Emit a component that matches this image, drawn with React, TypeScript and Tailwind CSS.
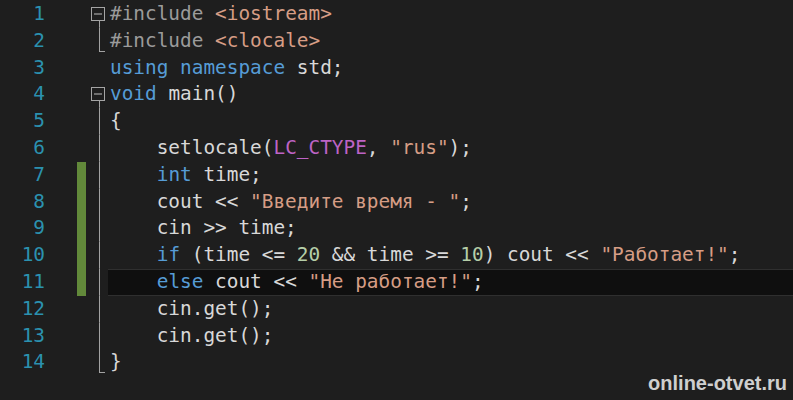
import React from "react";

type Tok = [string, string];

const C = {
  p: "text-[#d8d8d8]",
  pp: "text-[#9b9b9b]",
  s: "text-[#d69d85]",
  k: "text-[#569cd6]",
  m: "text-[#bd63c5]",
  n: "text-[#b5cea8]",
};

const lines: Tok[][] = [
  [["#include", "pp"], [" <iostream>", "s"]],
  [["#include", "pp"], [" <clocale>", "s"]],
  [["using", "k"], [" ", "p"], ["namespace", "k"], [" std;", "p"]],
  [["void", "k"], [" main()", "p"]],
  [["{", "p"]],
  [["    setlocale(", "p"], ["LC_CTYPE", "m"], [", ", "p"], ['"rus"', "s"], [");", "p"]],
  [["    ", "p"], ["int", "k"], [" time;", "p"]],
  [["    cout << ", "p"], ['"Введите время - "', "s"], [";", "p"]],
  [["    cin >> time;", "p"]],
  [
    ["    ", "p"],
    ["if", "k"],
    [" (time <= ", "p"],
    ["20", "n"],
    [" && time >= ", "p"],
    ["10", "n"],
    [") cout << ", "p"],
    ['"Работает!"', "s"],
    [";", "p"],
  ],
  [["    ", "p"], ["else", "k"], [" cout << ", "p"], ['"Не работает!"', "s"], [";", "p"]],
  [["    cin.get();", "p"]],
  [["    cin.get();", "p"]],
  [["}", "p"]],
];

// fold gutter shape per line
const fold = ["box", "end", "none", "box", "mid", "mid", "mid", "mid", "mid", "mid", "mid", "mid", "mid", "end"];

function Fold({ kind }: { kind: string }) {
  const stroke = "#a5a5a5";
  return (
    <svg width="20" height="26.8" viewBox="0 0 20 26.8" className="block">
      {kind === "box" && (
        <>
          <rect x="3.5" y="6.5" width="13" height="13" fill="none" stroke={stroke} strokeWidth="1" />
          <line x1="6" y1="13" x2="14" y2="13" stroke={stroke} strokeWidth="1.2" />
          <line x1="11.5" y1="19.5" x2="11.5" y2="26.8" stroke={stroke} strokeWidth="1" />
        </>
      )}
      {kind === "mid" && <line x1="11.5" y1="0" x2="11.5" y2="26.8" stroke={stroke} strokeWidth="1" />}
      {kind === "end" && (
        <>
          <line x1="11.5" y1="0" x2="11.5" y2="24" stroke={stroke} strokeWidth="1" />
          <line x1="11" y1="23.5" x2="17" y2="23.5" stroke={stroke} strokeWidth="1" />
        </>
      )}
    </svg>
  );
}

export default function App() {
  return (
    <div
      className="relative w-[793px] h-[400px] overflow-hidden bg-[#1e1e1e] pt-[1px]"
      style={{ fontFamily: '"DejaVu Sans Mono", "Liberation Mono", monospace' }}
    >
      {lines.map((toks, i) => {
        const changed = i >= 6 && i <= 10;
        const current = i === 10;
        return (
          <div key={i} className="flex h-[26.8px] items-stretch text-[19.4px] leading-[26.8px]">
            <div className="w-[45px] text-right text-[#2b91af]">{i + 1}</div>
            <div className="w-[32px]" />
            <div className={`w-[9px] ${changed ? "bg-[#62893a]" : ""}`} />
            <div className="w-[2px]" />
            <Fold kind={fold[i]} />
            <div
              className={`flex-1 whitespace-pre pl-[2px] ${
                current ? "border-y border-[#2f2f2f] bg-[#0f0f0f] leading-[24.8px]" : ""
              }`}
            >
              {toks.map(([t, c], j) => (
                <span key={j} className={C[c as keyof typeof C]}>
                  {t}
                </span>
              ))}
            </div>
          </div>
        );
      })}
      <div
        className="absolute right-[6px] bottom-[2px] text-[20px] font-bold text-[#cfcfcf]"
        style={{ fontFamily: '"Liberation Sans", Arial, sans-serif' }}
      >
        online-otvet.ru
      </div>
    </div>
  );
}
